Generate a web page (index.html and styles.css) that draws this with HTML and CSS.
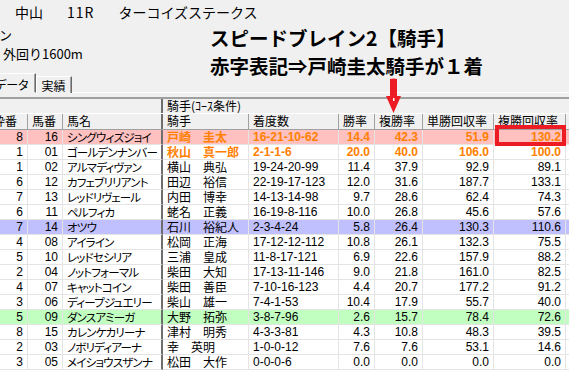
FILE: index.html
```html
<!DOCTYPE html>
<html lang="ja">
<head>
<meta charset="utf-8">
<title>中山 11R ターコイズステークス</title>
<link rel="stylesheet" href="styles.css">
</head>
<body>
<div class="page">
  <div class="top">
    <div class="title"><span class="t-place">中山</span><span class="t-race">11R</span><span class="t-name">ターコイズステークス</span></div>
    <div class="info1">ン</div>
    <div class="info2">外回り1600m</div>
    <div class="tabs">
      <div class="tab tab-active">データ</div>
      <div class="tab">実績</div>
    </div>
  </div>

  <div class="gridwrap">
    <div class="grid">
      <div class="row hrow1">
        <div class="hc hc-left"></div>
        <div class="hc hc-group">騎手(ｺｰｽ条件)</div>
      </div>
      <div class="row hrow2">
        <div class="hc hc-first">枠番</div>
        <div class="hc">馬番</div>
        <div class="hc c3">馬名</div>
        <div class="hc">騎手</div>
        <div class="hc">着度数</div>
        <div class="hc">勝率</div>
        <div class="hc">複勝率</div>
        <div class="hc">単勝回収率</div>
        <div class="hc">複勝回収率</div>
        <div class="hc"></div>
      </div>

      <div class="row drow pink">
        <div class="c num">8</div><div class="c num">16</div><div class="c c3 name">シングウィズジョイ</div><div class="c o">戸崎　圭太</div><div class="c rec o">16-21-10-62</div><div class="c num o">14.4</div><div class="c num o">42.3</div><div class="c num o">51.9</div><div class="c num o">130.2</div><div class="c"></div>
      </div>
      <div class="row drow">
        <div class="c num">1</div><div class="c num">01</div><div class="c c3 name">ゴールデンナンバー</div><div class="c o">秋山　真一郎</div><div class="c rec o">2-1-1-6</div><div class="c num o">20.0</div><div class="c num o">40.0</div><div class="c num o">106.0</div><div class="c num o">100.0</div><div class="c"></div>
      </div>
      <div class="row drow">
        <div class="c num">1</div><div class="c num">02</div><div class="c c3 name">アルマディヴァン</div><div class="c">横山　典弘</div><div class="c rec">19-24-20-99</div><div class="c num">11.4</div><div class="c num">37.9</div><div class="c num">92.9</div><div class="c num">89.1</div><div class="c"></div>
      </div>
      <div class="row drow">
        <div class="c num">6</div><div class="c num">12</div><div class="c c3 name">カフェブリリアント</div><div class="c">田辺　裕信</div><div class="c rec">22-19-17-123</div><div class="c num">12.0</div><div class="c num">31.6</div><div class="c num">187.7</div><div class="c num">133.1</div><div class="c"></div>
      </div>
      <div class="row drow">
        <div class="c num">7</div><div class="c num">13</div><div class="c c3 name">レッドリヴェール</div><div class="c">内田　博幸</div><div class="c rec">14-13-14-98</div><div class="c num">9.7</div><div class="c num">28.6</div><div class="c num">62.4</div><div class="c num">74.3</div><div class="c"></div>
      </div>
      <div class="row drow">
        <div class="c num">6</div><div class="c num">11</div><div class="c c3 name">ペルフィカ</div><div class="c">蛯名　正義</div><div class="c rec">16-19-8-116</div><div class="c num">10.0</div><div class="c num">26.8</div><div class="c num">45.6</div><div class="c num">57.6</div><div class="c"></div>
      </div>
      <div class="row drow blue">
        <div class="c num">7</div><div class="c num">14</div><div class="c c3 name">オツウ</div><div class="c">石川　裕紀人</div><div class="c rec">2-3-4-24</div><div class="c num">5.8</div><div class="c num">26.4</div><div class="c num">130.3</div><div class="c num">110.6</div><div class="c"></div>
      </div>
      <div class="row drow">
        <div class="c num">4</div><div class="c num">08</div><div class="c c3 name">アイライン</div><div class="c">松岡　正海</div><div class="c rec">17-12-12-112</div><div class="c num">10.8</div><div class="c num">26.1</div><div class="c num">132.3</div><div class="c num">75.5</div><div class="c"></div>
      </div>
      <div class="row drow">
        <div class="c num">5</div><div class="c num">10</div><div class="c c3 name">レッドセシリア</div><div class="c">三浦　皇成</div><div class="c rec">11-8-17-121</div><div class="c num">6.9</div><div class="c num">22.6</div><div class="c num">157.9</div><div class="c num">88.2</div><div class="c"></div>
      </div>
      <div class="row drow">
        <div class="c num">2</div><div class="c num">04</div><div class="c c3 name">ノットフォーマル</div><div class="c">柴田　大知</div><div class="c rec">17-13-11-146</div><div class="c num">9.0</div><div class="c num">21.8</div><div class="c num">161.0</div><div class="c num">82.5</div><div class="c"></div>
      </div>
      <div class="row drow">
        <div class="c num">4</div><div class="c num">07</div><div class="c c3 name">キャットコイン</div><div class="c">柴田　善臣</div><div class="c rec">7-10-16-123</div><div class="c num">4.4</div><div class="c num">20.7</div><div class="c num">177.2</div><div class="c num">91.2</div><div class="c"></div>
      </div>
      <div class="row drow">
        <div class="c num">3</div><div class="c num">06</div><div class="c c3 name">ディープジュエリー</div><div class="c">柴山　雄一</div><div class="c rec">7-4-1-53</div><div class="c num">10.4</div><div class="c num">17.9</div><div class="c num">55.7</div><div class="c num">40.0</div><div class="c"></div>
      </div>
      <div class="row drow green">
        <div class="c num">5</div><div class="c num">09</div><div class="c c3 name">ダンスアミーガ</div><div class="c">大野　拓弥</div><div class="c rec">3-8-7-96</div><div class="c num">2.6</div><div class="c num">15.7</div><div class="c num">78.4</div><div class="c num">72.6</div><div class="c"></div>
      </div>
      <div class="row drow">
        <div class="c num">8</div><div class="c num">15</div><div class="c c3 name">カレンケカリーナ</div><div class="c">津村　明秀</div><div class="c rec">4-3-3-81</div><div class="c num">4.3</div><div class="c num">10.8</div><div class="c num">48.3</div><div class="c num">39.5</div><div class="c"></div>
      </div>
      <div class="row drow">
        <div class="c num">2</div><div class="c num">03</div><div class="c c3 name">ノボリディアーナ</div><div class="c">幸　英明</div><div class="c rec">1-0-0-12</div><div class="c num">7.6</div><div class="c num">7.6</div><div class="c num">53.1</div><div class="c num">14.6</div><div class="c"></div>
      </div>
      <div class="row drow">
        <div class="c num">3</div><div class="c num">05</div><div class="c c3 name">メイショウスザンナ</div><div class="c">松田　大作</div><div class="c rec">0-0-0-6</div><div class="c num">0.0</div><div class="c num">0.0</div><div class="c num">0.0</div><div class="c num">0.0</div><div class="c"></div>
      </div>
    </div>
  </div>

  <div class="note">
    <div class="note-line">スピードブレイン2【騎手】</div>
    <div class="note-line">赤字表記⇒戸崎圭太騎手が１着</div>
  </div>

  <svg class="arrow" width="17" height="36" viewBox="0 0 17 36" aria-hidden="true">
    <path d="M5 1 Q8.5 0 12 1 L12 18 L16 18 L8.5 35 L1 18 L5 18 Z" fill="#ed1c24"/>
    <rect x="8" y="20" width="1.5" height="3" fill="#ffffff"/>
  </svg>

  <div class="highlight"></div>
</div>
</body>
</html>
```

FILE: styles.css
```css
html, body {
  margin: 0;
  padding: 0;
}

body {
  background: #f0f0f0;
  font-family: "Noto Sans CJK JP", "Noto Sans", sans-serif;
  color: #000;
}

.page {
  position: relative;
  width: 569px;
  height: 370px;
  overflow: hidden;
  background: #f0f0f0;
}

/* ---- top info area ---- */
.top {
  height: 97px;
  display: flex;
  flex-direction: column;
}

.title {
  height: 25px;
  line-height: 25px;
  font-size: 14px;
  padding-left: 15px;
  white-space: nowrap;
}

.t-place { margin-right: 24px; }
.t-race { margin-right: 24px; letter-spacing: 1px; }

.info1 {
  height: 20px;
  line-height: 20px;
  font-size: 13px;
  margin-left: -1px;
}

.info2 {
  height: 18px;
  line-height: 18px;
  font-size: 13px;
  padding-left: 3px;
}

.tabs {
  margin-top: 10px;
  height: 20px;
  display: flex;
  align-items: flex-end;
  border-bottom: 1px solid #ffffff;
  box-sizing: border-box;
}

.tab {
  box-sizing: border-box;
  font-size: 12px;
  line-height: 15px;
  height: 17px;
  padding: 1px 5px 0 5px;
  border-top: 1px solid #ffffff;
  border-left: 1px solid #ffffff;
  border-right: 1px solid #696969;
  box-shadow: inset -1px 0 0 #a0a0a0;
  background: #f0f0f0;
  margin-bottom: -1px;
  font-feature-settings: "palt";
  white-space: nowrap;
}

.tab-active {
  height: 20px;
  padding: 3px 6px 0 0;
  margin-left: -6px;
  border-bottom: 1px solid #f0f0f0;
  margin-bottom: -1px;
}

/* ---- grid ---- */
.gridwrap {
  overflow: hidden;
  border-top: 2px solid #a0a0a0;
}

.grid {
  margin-left: -10px;
  width: 620px;
}

.row {
  display: grid;
  grid-template-columns: 38px 35px 100px 86px 90px 36px 48px 71px 72px 44px;
  font-size: 12px;
  white-space: nowrap;
}

.hrow1 {
  height: 15px;
  background: #f0f0f0;
  border-bottom: 1px solid #ffffff;
  box-sizing: border-box;
}

.hrow2 {
  height: 16px;
  background: #f0f0f0;
  border-bottom: 1px solid #a0a0a0;
  box-sizing: border-box;
}

.hc {
  box-sizing: border-box;
  line-height: 14px;
  padding-left: 4px;
  border-right: 1px solid #a0a0a0;
  font-feature-settings: "palt";
}

.hc-first {
  padding-left: 3px;
}

.hc-left {
  grid-column: 1 / 4;
  border-right: 2px solid #6e6e6e;
}

.hc-group {
  grid-column: 4 / -1;
  border-right: none;
}

.drow {
  height: 15px;
  background: #ffffff;
}

.c {
  box-sizing: border-box;
  height: 15px;
  line-height: 14px;
  padding: 0 4px;
  border-right: 1px solid #e4e4e4;
  border-bottom: 1px solid #e4e4e4;
}

.c3 {
  border-right: 2px solid #6e6e6e;
}

.hrow2 .c3 {
  border-right: 2px solid #6e6e6e;
}

.num {
  text-align: right;
  font-family: "Liberation Sans", sans-serif;
}

.rec {
  font-family: "Liberation Sans", sans-serif;
}

.name {
  font-feature-settings: "palt";
  font-size: 11.5px;
  letter-spacing: -0.8px;
  padding-left: 4px;
}

.o {
  color: #ff8000;
  font-weight: bold;
}

.pink { background: #ffc0c0; }
.blue { background: #c0c0ff; }
.green { background: #c0ffc0; }

/* ---- annotation overlay ---- */
.note {
  position: absolute;
  left: 210px;
  top: 24px;
  font-family: "Noto Sans CJK JP", sans-serif;
  font-weight: bold;
  font-size: 19.5px;
  line-height: 28px;
  white-space: nowrap;
  color: #000;
}

.arrow {
  position: absolute;
  left: 385px;
  top: 78px;
}

.highlight {
  position: absolute;
  left: 495px;
  top: 125px;
  width: 71px;
  height: 21px;
  box-sizing: border-box;
  border: 4px solid #ed1c24;
}
```
